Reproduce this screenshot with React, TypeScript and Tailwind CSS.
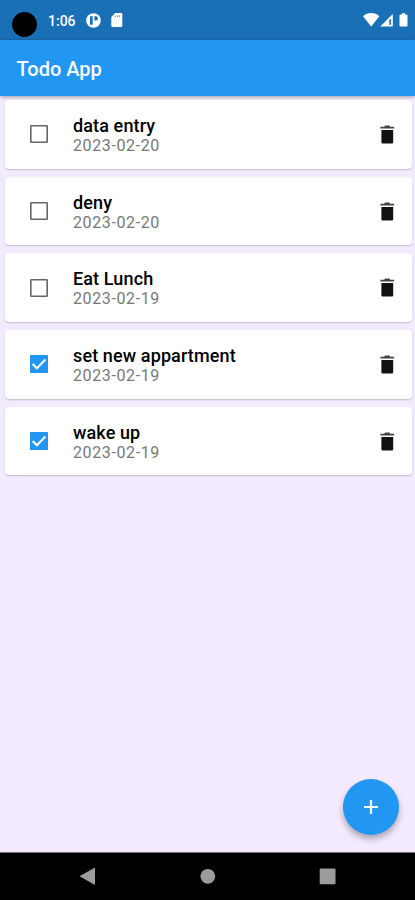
import { useState } from "react";

type Todo = {
    id: number;
    title: string;
    date: string;
    done: boolean;
};

const initialTodos: Todo[] = [
    { id: 1, title: "data entry", date: "2023-02-20", done: false },
    { id: 2, title: "deny", date: "2023-02-20", done: false },
    { id: 3, title: "Eat Lunch", date: "2023-02-19", done: false },
    { id: 4, title: "set new appartment", date: "2023-02-19", done: true },
    { id: 5, title: "wake up", date: "2023-02-19", done: true },
];

const StatusBar = () => (
    <div className="flex h-[40px] shrink-0 items-start bg-[#1a70b7] pl-3 text-white">
        <div className="mt-3 h-[25px] w-[25px] rounded-full bg-black" />
        <span className="mt-[11px] ml-[11px] w-[29px] text-[14px] leading-5 font-medium whitespace-nowrap">1:06</span>
        <svg className="mt-[13px] ml-[9px]" width="15" height="15" viewBox="0 0 15 15">
            <circle cx="7.5" cy="7.5" r="7.3" fill="white" />
            <path d="M4 3.2h2.7v8.6H4zM8.4 3.2h1.8a1.6 1.6 0 0 1 1.6 1.6v1a1.6 1.6 0 0 1-1.6 1.6H8.4z" fill="#1a70b7" />
        </svg>
        <svg className="mt-[13px] ml-[10px]" width="12" height="14" viewBox="0 0 12 14">
            <path d="M4.2 0H10.3a1 1 0 0 1 1 1v12a1 1 0 0 1-1 1H1.3a1 1 0 0 1-1-1V4z" fill="white" />
            <path d="M4.2 2.4v1.8M6.4 2.4v1.8M8.6 2.4v1.8" stroke="#1a70b7" strokeWidth="0.7" />
        </svg>
        <div className="mt-[12px] mr-[7px] ml-auto flex">
            <svg width="45" height="16" viewBox="0 0 45 16">
                <path d="M0 4.2C4.5 0 11.9 0 16.4 4.2L8.2 14.6z" fill="white" />
                <path d="M17.2 14.6L29.8 2v12.6z" fill="white" />
                <path d="M27.2 7.2v5.6" stroke="#1a70b7" strokeWidth="1.7" />
                <path d="M39 1.2h3v1.4h1.5a1 1 0 0 1 1 1v10a1 1 0 0 1-1 1h-6a1 1 0 0 1-1-1v-10a1 1 0 0 1 1-1H39z" fill="white" />
            </svg>
        </div>
    </div>
);

const Checkbox = ({ checked, onChange }: { checked: boolean; onChange: () => void }) => (
    <button type="button" role="checkbox" aria-checked={checked} onClick={onChange}>
        <svg width="18" height="18" viewBox="0 0 18 18" fill="none">
            {checked ? (
                <>
                    <rect width="18" height="18" rx="0.8" fill="#2196f3" />
                    <path d="M2.6 9l4.3 4.3 8.5-8.8" stroke="white" strokeWidth="2" />
                </>
            ) : (
                <rect x="0.8" y="0.8" width="16.4" height="16.4" rx="0.5" stroke="#666666" strokeWidth="1.6" />
            )}
        </svg>
    </button>
);

const TodoCard = ({ todo, onToggle, onDelete }: { todo: Todo; onToggle: () => void; onDelete: () => void }) => (
    <li className="flex h-[68.7px] items-center rounded-[4px] bg-white pr-[17px] pl-[25px] shadow-[0_1px_1.5px_rgba(0,0,0,0.2)]">
        <Checkbox checked={todo.done} onChange={onToggle} />
        <div className="ml-[25.5px] pt-[2.5px]">
            <p className="text-[18px] leading-[20px] font-medium tracking-[0.12px] text-black">{todo.title}</p>
            <p className="text-[16px] leading-[19px] tracking-[0.62px] text-[#787878]">{todo.date}</p>
        </div>
        <button type="button" aria-label="Delete" className="ml-auto" onClick={onDelete}>
            <svg width="15" height="19" viewBox="0 0 15 19">
                <path d="M.4 1.8h3.7L5.2.4h4.1l1.1 1.4h3.7v1.8H.4z" fill="#444444" />
                <path d="M1.4 5h11.8v12.2a1.2 1.2 0 0 1-1.2 1.2H2.6a1.2 1.2 0 0 1-1.2-1.2z" fill="#111111" />
            </svg>
        </button>
    </li>
);

const NavigationBar = () => (
    <div className="flex h-[48px] shrink-0 items-center border-t border-[#777777] bg-black">
        <svg width="415" height="47" viewBox="0 0 415 47" fill="#9c9c9c">
            <path d="M79.5 23.2L95 14.5v17.5z" />
            <circle cx="207.8" cy="23.3" r="7.4" />
            <rect x="319.7" y="15.4" width="15.8" height="15.8" rx="1" />
        </svg>
    </div>
);

export default function App() {
    const [todos, setTodos] = useState(initialTodos);

    const toggle = (id: number) => {
        setTodos((prev) => prev.map((todo) => (todo.id === id ? { ...todo, done: !todo.done } : todo)));
    };

    const remove = (id: number) => {
        setTodos((prev) => prev.filter((todo) => todo.id !== id));
    };

    return (
        <div className="flex h-[900px] w-[415px] flex-col overflow-hidden bg-[#f3eafd] font-[Roboto,sans-serif]">
            <StatusBar />
            <header className="z-10 flex h-[56px] shrink-0 items-center bg-[#2196f3] pt-px pl-[16.5px] shadow-[0_1px_4px_rgba(0,0,0,0.35)]">
                <h1 className="text-[20px] leading-6 font-medium text-white">Todo App</h1>
            </header>

            <main className="relative flex-1">
                <ul className="flex flex-col gap-2 pt-[4px] pr-[3.5px] pl-[4.5px]">
                    {todos.map((todo) => (
                        <TodoCard
                            key={todo.id}
                            todo={todo}
                            onToggle={() => toggle(todo.id)}
                            onDelete={() => remove(todo.id)}
                        />
                    ))}
                </ul>

                <button
                    type="button"
                    aria-label="Add todo"
                    className="absolute right-[16px] bottom-[17px] flex h-[56px] w-[56px] items-center justify-center rounded-full bg-[#2196f3] shadow-[0_4px_6px_rgba(0,0,0,0.3)]"
                >
                    <svg width="14" height="14" viewBox="0 0 14 14" stroke="white" strokeWidth="2.2">
                        <path d="M7 0v14M0 7h14" />
                    </svg>
                </button>
            </main>

            <NavigationBar />
        </div>
    );
}
